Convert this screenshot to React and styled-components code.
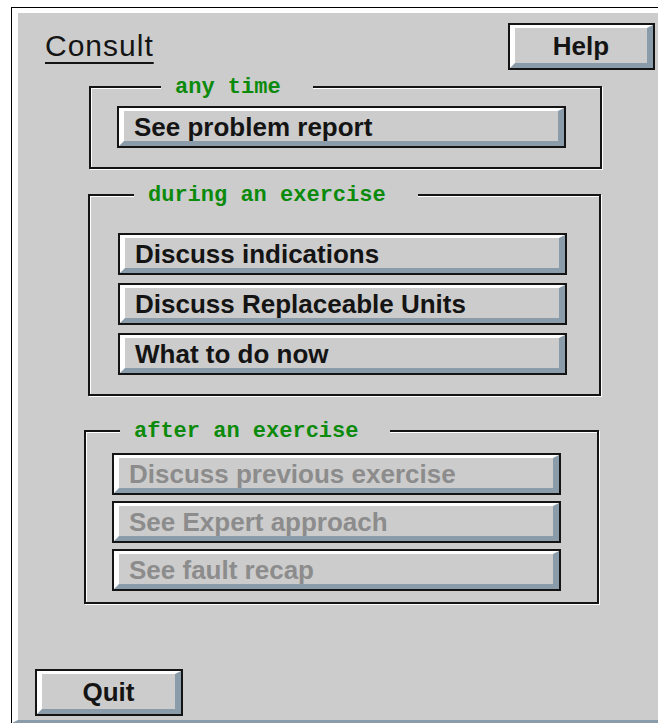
import React from 'react'
import styled, { createGlobalStyle } from 'styled-components'

const face = '#cccccc'
const shade = '#8a9ba9'
const ink = '#141414'

const GlobalStyle = createGlobalStyle`
  html, body {
    margin: 0;
    padding: 0;
    background: #ffffff;
    overflow: hidden;
  }
  body {
    font-family: "Liberation Sans", Arial, sans-serif;
  }
`

const Frame = styled.div`
  margin: 7px 0 0 11px;
  border-top: 1px solid #000;
  border-left: 1px solid #000;
  width: 646px;
`

const Panel = styled.div`
  background: ${face};
  border-top: 5px solid #ffffff;
  border-left: 6px solid #ffffff;
  border-bottom: 3px solid ${shade};
  padding-bottom: 6px;
  display: flex;
  flex-direction: column;
  align-items: flex-start;
`

const Header = styled.div`
  width: 635px;
  display: flex;
  justify-content: space-between;
  align-items: flex-start;
`

const Title = styled.div`
  margin: 18px 0 0 27px;
  font-size: 30px;
  line-height: 30px;
  letter-spacing: 1px;
  color: ${ink};
  text-decoration: underline;
  text-decoration-thickness: 2px;
  text-underline-offset: 6px;
`

// Motif style push button: black rim, light top/left, slate bottom/right
const Button = styled.button`
  box-sizing: border-box;
  display: flex;
  align-items: center;
  justify-content: ${({ $center }) => ($center ? 'center' : 'flex-start')};
  width: ${({ $width }) => $width}px;
  height: ${({ $height }) => $height}px;
  margin: ${({ $top = 0 }) => $top}px 0 0 ${({ $left = 0 }) => $left}px;
  padding: 1px 0 0 ${({ $center }) => ($center ? 0 : 10)}px;
  background: ${face};
  border-style: solid;
  border-width: 3px 6px 5px 5px;
  border-color: #ffffff ${shade} ${shade} #ffffff;
  box-shadow: 0 0 0 2px ${ink};
  font-family: "Liberation Sans", Arial, sans-serif;
  font-weight: bold;
  font-size: 26px;
  line-height: 26px;
  color: ${({ disabled }) => (disabled ? '#8c8c8c' : ink)};
  cursor: ${({ disabled }) => (disabled ? 'default' : 'pointer')};
`

const Group = styled.div`
  box-sizing: border-box;
  width: ${({ $width }) => $width}px;
  margin: ${({ $top }) => $top}px 0 0 ${({ $left }) => $left}px;
  padding-bottom: ${({ $bottom }) => $bottom}px;
  border: 2px solid ${ink};
  box-shadow: inset 1px 1px 0 #ffffff, 1px 1px 0 #ffffff;
  display: flex;
  flex-direction: column;
  align-items: flex-start;
`

const Legend = styled.div`
  margin: -11px 0 0 ${({ $left }) => $left}px;
  padding: 0 32px 0 14px;
  background: ${face};
  font-family: "Liberation Mono", "Courier New", monospace;
  font-weight: bold;
  font-size: 22px;
  line-height: 22px;
  color: #0b8a0b;
  white-space: pre;
`

const Buttons = styled.div`
  display: flex;
  flex-direction: column;
  gap: ${({ $gap }) => $gap}px;
  margin: ${({ $top }) => $top}px 0 0 ${({ $left }) => $left}px;
`

const groups = [
  {
    title: 'any time', left: 71, top: 18, width: 513, bottom: 21,
    legendLeft: 70, btnTop: 9, btnLeft: 28, gap: 12,
    items: [{ label: 'See problem report' }],
  },
  {
    title: 'during an exercise', left: 70, top: 25, width: 513, bottom: 21,
    legendLeft: 44, btnTop: 28, btnLeft: 30, gap: 12,
    items: [
      { label: 'Discuss indications' },
      { label: 'Discuss Replaceable Units' },
      { label: 'What to do now' },
    ],
  },
  {
    title: 'after an exercise', left: 66, top: 34, width: 515, bottom: 13,
    legendLeft: 34, btnTop: 12, btnLeft: 28, gap: 10,
    items: [
      { label: 'Discuss previous exercise', off: true },
      { label: 'See Expert approach', off: true },
      { label: 'See fault recap', off: true },
    ],
  },
]

export default function App() {
  return (
    <>
      <GlobalStyle />
      <Frame>
        <Panel>
          <Header>
            <Title>Consult</Title>
            <Button $center $width={143} $height={43} $top={12}>Help</Button>
          </Header>
          {groups.map((g) => (
            <Group key={g.title} $width={g.width} $top={g.top} $left={g.left} $bottom={g.bottom}>
              <Legend $left={g.legendLeft}>{g.title}</Legend>
              <Buttons $gap={g.gap} $top={g.btnTop} $left={g.btnLeft}>
                {g.items.map((item) => (
                  <Button key={item.label} $width={445} $height={38} disabled={item.off}>
                    {item.label}
                  </Button>
                ))}
              </Buttons>
            </Group>
          ))}
          <Button $center $width={144} $height={43} $top={67} $left={19}>Quit</Button>
        </Panel>
      </Frame>
    </>
  )
}
